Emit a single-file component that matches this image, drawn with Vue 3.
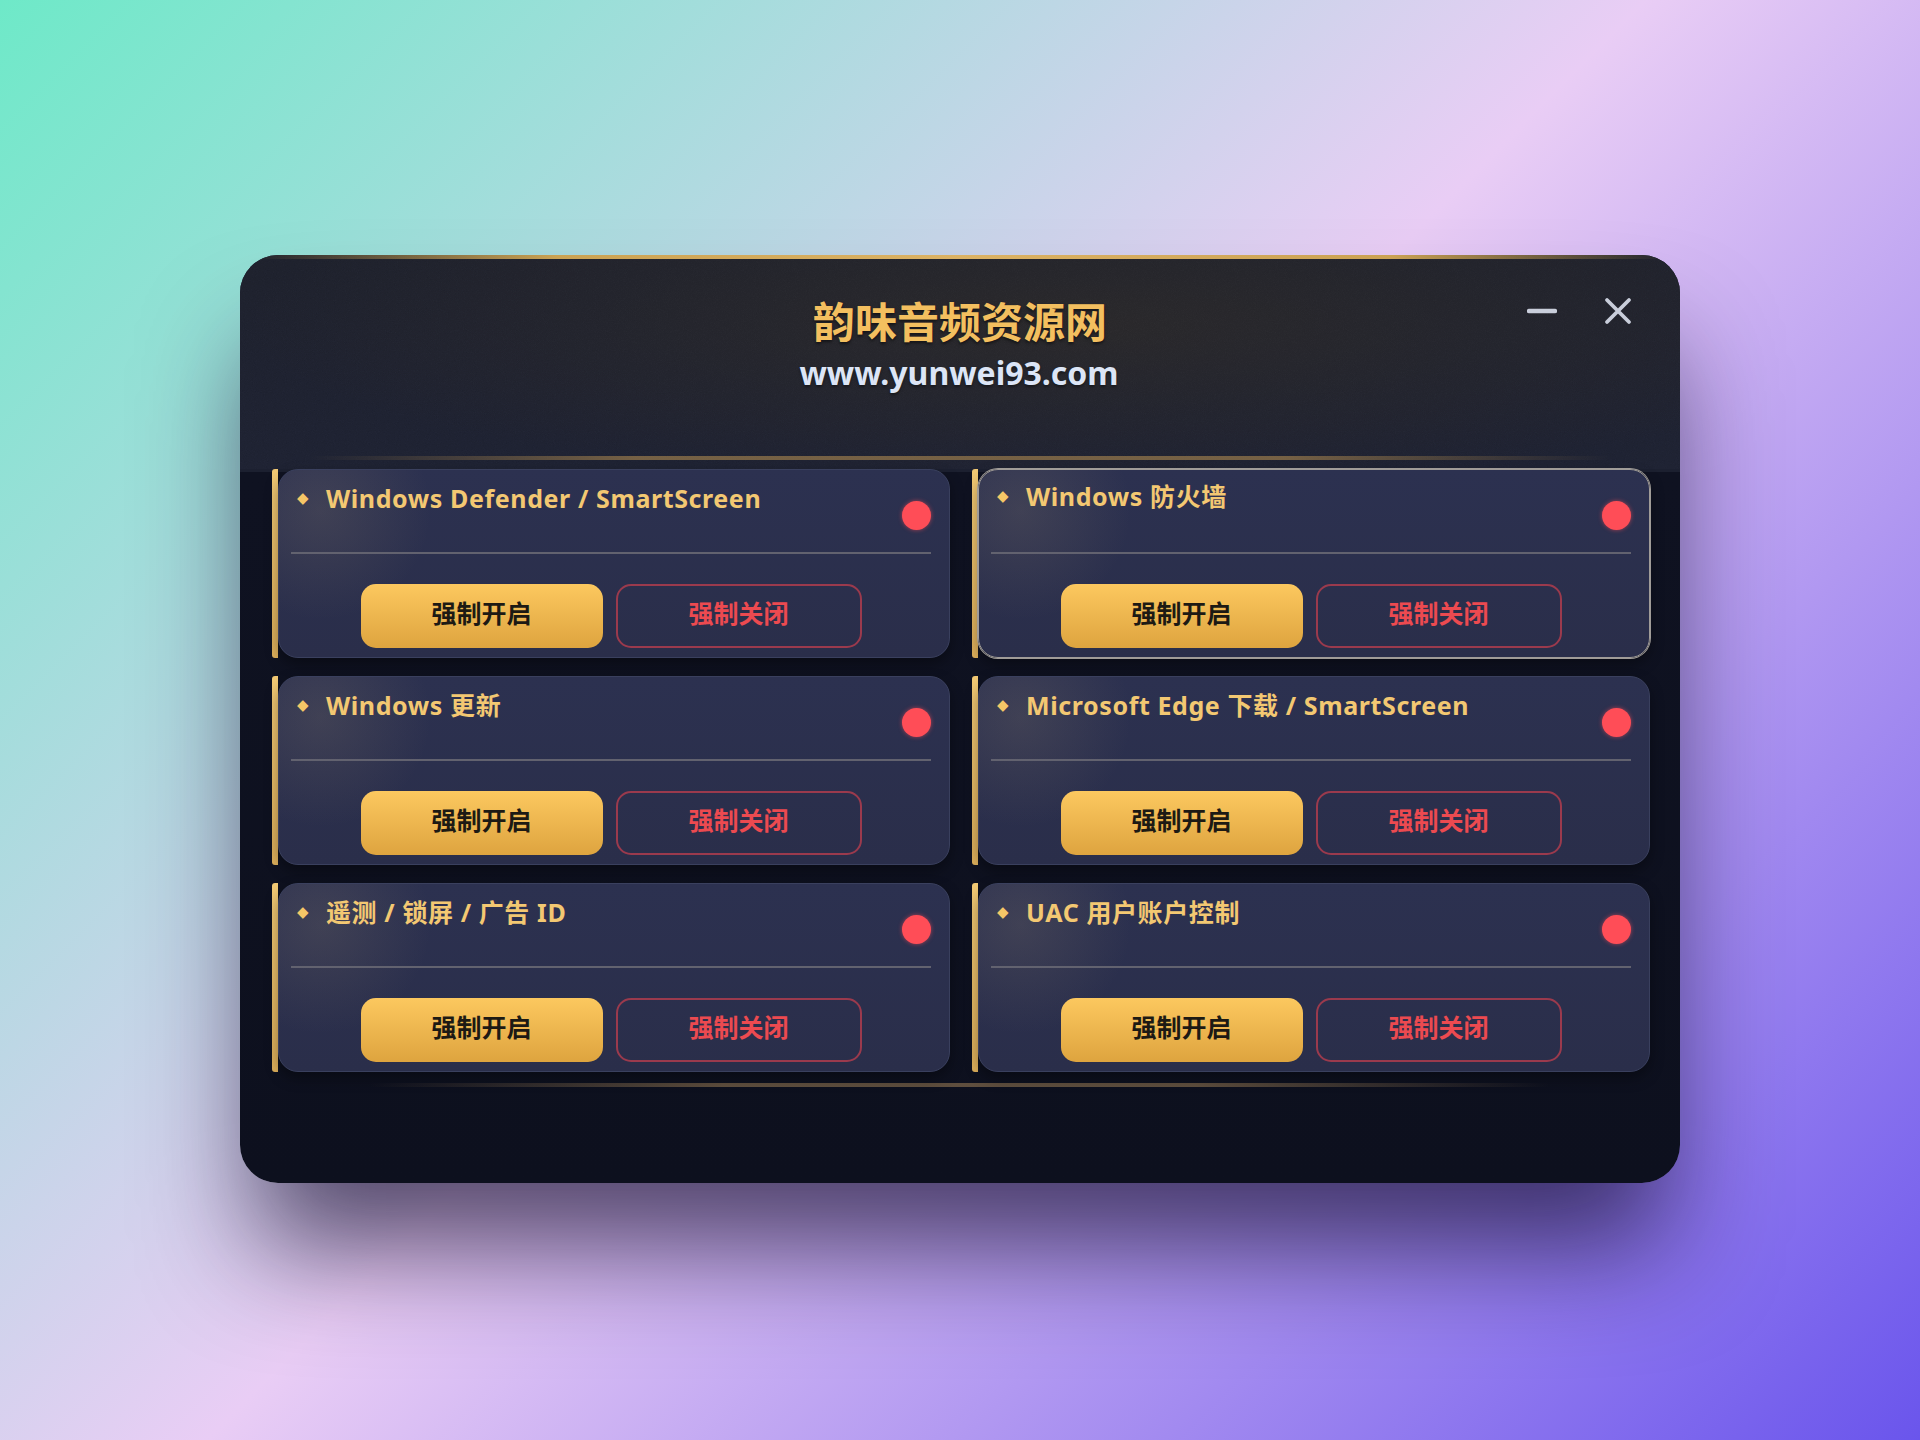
<script setup>
const cards = [
  { title: 'Windows Defender / SmartScreen' },
  { title: 'Windows 防火墙', active: true },
  { title: 'Windows 更新' },
  { title: 'Microsoft Edge 下载 / SmartScreen' },
  { title: '遥测 / 锁屏 / 广告 ID' },
  { title: 'UAC 用户账户控制' }
]
</script>

<template>
  <div class="page">
    <div class="window">
      <header class="header">
        <div class="topline"></div>
        <div class="head-main">
          <div></div>
          <div class="brand">
            <h1 class="name">韵味音频资源网</h1>
            <div class="site">www.yunwei93.com</div>
          </div>
          <div class="controls">
            <svg class="ic-min" width="30" height="6" viewBox="0 0 30 6"><path d="M2 3H28" stroke="#c9cedb" stroke-width="4.4" stroke-linecap="round"/></svg>
            <svg class="ic-close" width="28" height="28" viewBox="0 0 28 28"><path d="M3 3L25 25M25 3L3 25" stroke="#c9cedb" stroke-width="3.8" stroke-linecap="round"/></svg>
          </div>
        </div>
        <div class="rule"></div>
      </header>

      <section class="grid">
        <div v-for="c in cards" :key="c.title" class="cell">
          <div class="bar"></div>
          <div class="card" :class="{ active: c.active }">
            <div class="card-head">
              <div class="card-title"><span class="gem">◆</span><span>{{ c.title }}</span></div>
              <span class="dot"></span>
            </div>
            <div class="card-rule"></div>
            <div class="actions">
              <button class="btn on">强制开启</button>
              <button class="btn off">强制关闭</button>
            </div>
          </div>
        </div>
      </section>

      <div class="foot-rule"></div>
    </div>
  </div>
</template>

<style>
html, body { margin: 0; padding: 0; }
</style>

<style scoped>
.page {
  width: 1920px;
  height: 1440px;
  box-sizing: border-box;
  padding: 255px 240px 0;
  background: linear-gradient(135deg, #6ee9c8 0%, #e9cdf5 49%, #6a55ec 100%);
  font-family: "Noto Sans", "Noto Sans CJK SC", sans-serif;
}
.window {
  width: 1440px;
  height: 928px;
  border-radius: 38px;
  overflow: hidden;
  background: linear-gradient(#1c2030 0, #1c2030 217px, #0f1221 217px, #0d101e 100%);
  box-shadow: 0 80px 110px -15px rgba(18, 12, 44, 0.68);
}
.header {
  height: 214px;
  box-sizing: border-box;
  background:
    url("data:image/svg+xml,%3Csvg xmlns='http://www.w3.org/2000/svg' width='220' height='220'%3E%3Cfilter id='n'%3E%3CfeTurbulence type='fractalNoise' baseFrequency='1.1' numOctaves='2' stitchTiles='stitch'/%3E%3CfeColorMatrix values='0 0 0 0 1 0 0 0 0 1 0 0 0 0 1 0 0 0 0.035 0'/%3E%3C/filter%3E%3Crect width='220' height='220' filter='url(%23n)'/%3E%3C/svg%3E"),
    radial-gradient(ellipse 58% 75% at 58% 32%, rgba(46, 42, 38, 0.65), rgba(34, 34, 42, 0) 100%),
    linear-gradient(#1b1e2a, #1b1f30);
}
.topline {
  height: 4px;
  background: linear-gradient(90deg, rgba(214, 170, 90, 0) 1%, #cba253 22%, #dcb264 50%, #cba253 80%, rgba(214, 170, 90, 0) 99%);
}
.head-main {
  display: grid;
  grid-template-columns: 1fr auto 1fr;
  padding-top: 36px;
}
.brand { text-align: center; }
.name {
  margin: 0;
  font-size: 42px;
  line-height: 50px;
  font-weight: 700;
  color: #f3bf5f;
  font-family: "Noto Sans CJK SC", sans-serif;
  text-shadow: 0 2px 3px rgba(0, 0, 0, 0.5);
}
.site {
  margin-top: 8px;
  font-size: 32px;
  line-height: 40px;
  font-weight: 700;
  color: #dce5f6;
  text-shadow: 0 2px 3px rgba(0, 0, 0, 0.4);
  transform: translateX(-1px);
}
.controls {
  display: flex;
  align-items: center;
  justify-content: flex-end;
  height: 28px;
  gap: 47px;
  padding-right: 48px;
  margin-top: 2px;
}
.rule {
  height: 4px;
  margin: 63px 70px 0;
  background: linear-gradient(90deg, rgba(190, 150, 90, 0), rgba(150, 120, 75, 0.72) 25%, rgba(150, 120, 75, 0.72) 75%, rgba(190, 150, 90, 0));
}
.grid {
  display: grid;
  grid-template-columns: 678px 678px;
  column-gap: 22px;
  row-gap: 18px;
  padding-left: 32px;
}
.cell {
  display: flex;
  height: 189px;
}
.bar {
  width: 6px;
  flex: none;
  background: linear-gradient(#f2c974, #dcae5a);
  border-radius: 3px 0 0 3px;
}
.card {
  flex: 1;
  box-sizing: border-box;
  border: 1px solid #3a405e;
  border-radius: 20px;
  background:
    radial-gradient(circle 110px at 42px 40px, rgba(170, 150, 115, 0.16), rgba(170, 150, 115, 0) 100%),
    linear-gradient(#2c3150, #2a2e4a);
  box-shadow: 0 6px 14px rgba(0, 0, 0, 0.35);
}
.card.active {
  border-color: #a09c98;
  box-shadow: 0 0 0 1px #a09c98, 0 6px 14px rgba(0, 0, 0, 0.35);
}
.card-head {
  display: flex;
  align-items: flex-start;
  justify-content: space-between;
  height: 82px;
  box-sizing: border-box;
  padding: 11px 18px 0 14px;
}
.card.active .card-title { margin-top: -2px; }
.card-title {
  display: flex;
  align-items: center;
  font-size: 25px;
  line-height: 34px;
  font-weight: 700;
  letter-spacing: 0.6px;
  color: #f3c872;
}
.gem {
  width: 33px;
  padding-left: 4px;
  box-sizing: border-box;
  margin-top: -1px;
  font-size: 15px;
  line-height: 34px;
  color: #f6c667;
  font-family: "DejaVu Sans", sans-serif;
}
.dot {
  width: 29px;
  height: 29px;
  margin-top: 20px;
  border-radius: 50%;
  background: #ff4d57;
  box-shadow: 0 0 4px rgba(255, 77, 87, 0.6);
}
.card-rule {
  height: 2px;
  margin: 0 18px 0 12px;
  background: #62626f;
}
.actions {
  display: flex;
  gap: 13px;
  padding: 30px 87px 0 82px;
}
.btn {
  flex: 1;
  height: 64px;
  box-sizing: border-box;
  padding: 0 1px 9px 0;
  border-radius: 15px;
  font-family: "Noto Sans CJK SC", sans-serif;
  font-size: 25px;
  font-weight: 700;
  cursor: pointer;
}
.btn.on {
  border: none;
  color: #1d1a14;
  background: linear-gradient(#fcc85f, #dea43f);
}
.btn.off {
  border: 2px solid #9b3a4d;
  color: #ec4a50;
  background: transparent;
}
.foot-rule {
  height: 4px;
  margin: 11px 130px 0;
  background: linear-gradient(90deg, rgba(150, 120, 85, 0), rgba(115, 94, 70, 0.8) 30%, rgba(115, 94, 70, 0.8) 70%, rgba(150, 120, 85, 0));
}
</style>
